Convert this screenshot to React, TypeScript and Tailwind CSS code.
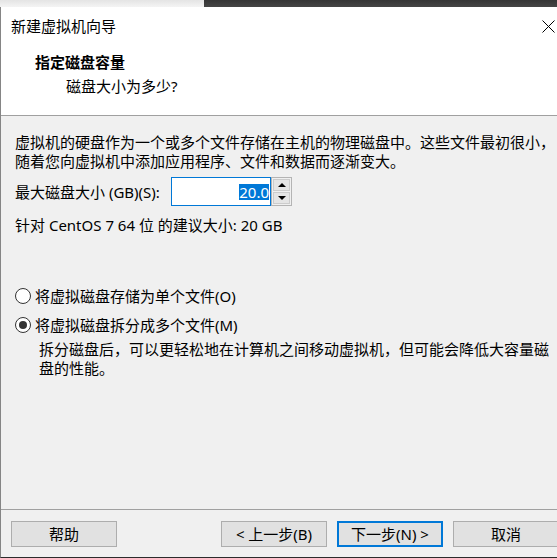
import React from "react";

const font = { fontFamily: '"Noto Sans", "Noto Sans CJK SC", sans-serif' };

function Radio({ checked, label }: { checked: boolean; label: React.ReactNode }) {
  return (
    <div className="flex items-center h-[20px]">
      <div className="w-[16px] h-[16px] rounded-full border border-[#333333] bg-white flex items-center justify-center">
        {checked && <div className="w-[8px] h-[8px] rounded-full bg-[#333333]" />}
      </div>
      <span className="ml-[4px] leading-[20px] whitespace-nowrap">{label}</span>
    </div>
  );
}

function Btn({ children, primary }: { children: React.ReactNode; primary?: boolean }) {
  return (
    <div
      className={
        "w-[106px] h-[26px] bg-[#e1e1e1] flex items-center justify-center leading-[20px] whitespace-nowrap " +
        (primary ? "border-2 border-[#0078d7]" : "border border-[#adadad]")
      }
    >
      {children}
    </div>
  );
}

export default function App() {
  return (
    <div className="w-[557px] h-[558px] overflow-hidden bg-[#2b2b2b] text-[15px] text-black" style={font}>
      <div className="flex h-[7px]">
        <div className="w-[204px] bg-gradient-to-b from-[#e4e4e4] to-[#f4f4f4]" />
        <div className="flex-1 bg-gradient-to-b from-[#353535] to-[#454545]" />
      </div>
      <div className="w-[600px] h-[551px] flex flex-col border-l border-[#858585] border-b border-b-[#2b2b2b] bg-[#f0f0f0]">
        <div className="bg-white border-b border-[#a0a0a0]">
          <div className="h-[38px] flex items-center justify-between pl-[10px] w-[556px] pr-[1px]">
            <span className="leading-[20px]">新建虚拟机向导</span>
            <svg width="13" height="13" viewBox="0 0 13 13" className="mr-[1px]">
              <path d="M0.5 0.5 L12.5 12.5 M12.5 0.5 L0.5 12.5" stroke="#000" strokeWidth="1" fill="none" />
            </svg>
          </div>
          <div className="pt-[7px] pb-[19px]">
            <div className="pl-[34px] font-bold leading-[20px]">指定磁盘容量</div>
            <div className="pl-[65px] mt-[4px] leading-[20px]">磁盘大小为多少?</div>
          </div>
        </div>
        <div className="flex-1 pl-[14px] pt-[17px]">
          <div className="leading-[19px] whitespace-nowrap">
            <div>虚拟机的硬盘作为一个或多个文件存储在主机的物理磁盘中。这些文件最初很小，</div>
            <div>随着您向虚拟机中添加应用程序、文件和数据而逐渐变大。</div>
          </div>
          <div className="flex mt-[6px] h-[29px]">
            <div className="w-[156px] flex items-center leading-[20px] whitespace-nowrap">最大磁盘大小 (GB)(S):</div>
            <div className="w-[100px] h-[29px] border border-[#0078d7] bg-white flex items-center justify-end pr-[1px]">
              <span className="bg-[#0078d7] text-white leading-[16px]">20.0</span>
            </div>
            <div className="w-[21px] h-[29px] border border-[#b4b4b4] bg-[#f0f0f0] p-[1px] flex flex-col gap-[1px]">
              <div className="flex-1 bg-[#e5e5e5] border border-[#cccccc] flex items-center justify-center">
                <svg width="8" height="4" viewBox="0 0 8 4"><path d="M0 4 L4 0 L8 4 Z" fill="#000" /></svg>
              </div>
              <div className="flex-1 bg-[#e5e5e5] border border-[#cccccc] flex items-center justify-center">
                <svg width="8" height="4" viewBox="0 0 8 4"><path d="M0 0 L8 0 L4 4 Z" fill="#000" /></svg>
              </div>
            </div>
          </div>
          <div className="mt-[10px] leading-[19px] whitespace-nowrap">针对 CentOS 7 64 位 的建议大小: 20 GB</div>
          <div className="mt-[51px]">
            <Radio checked={false} label="将虚拟磁盘存储为单个文件(O)" />
          </div>
          <div className="mt-[9px]">
            <Radio checked={true} label="将虚拟磁盘拆分成多个文件(M)" />
          </div>
          <div className="mt-[5px] pl-[24px] leading-[19px] whitespace-nowrap">
            <div>拆分磁盘后，可以更轻松地在计算机之间移动虚拟机，但可能会降低大容量磁</div>
            <div>盘的性能。</div>
          </div>
        </div>
        <div className="border-t border-[#a0a0a0] h-[48px] pt-[11px] pl-[10px] flex items-start">
          <Btn>帮助</Btn>
          <div className="ml-[104px]">
            <Btn>&lt; 上一步(B)</Btn>
          </div>
          <div className="ml-[10px]">
            <Btn primary>下一步(N) &gt;</Btn>
          </div>
          <div className="ml-[10px]">
            <Btn>取消</Btn>
          </div>
        </div>
      </div>
    </div>
  );
}
